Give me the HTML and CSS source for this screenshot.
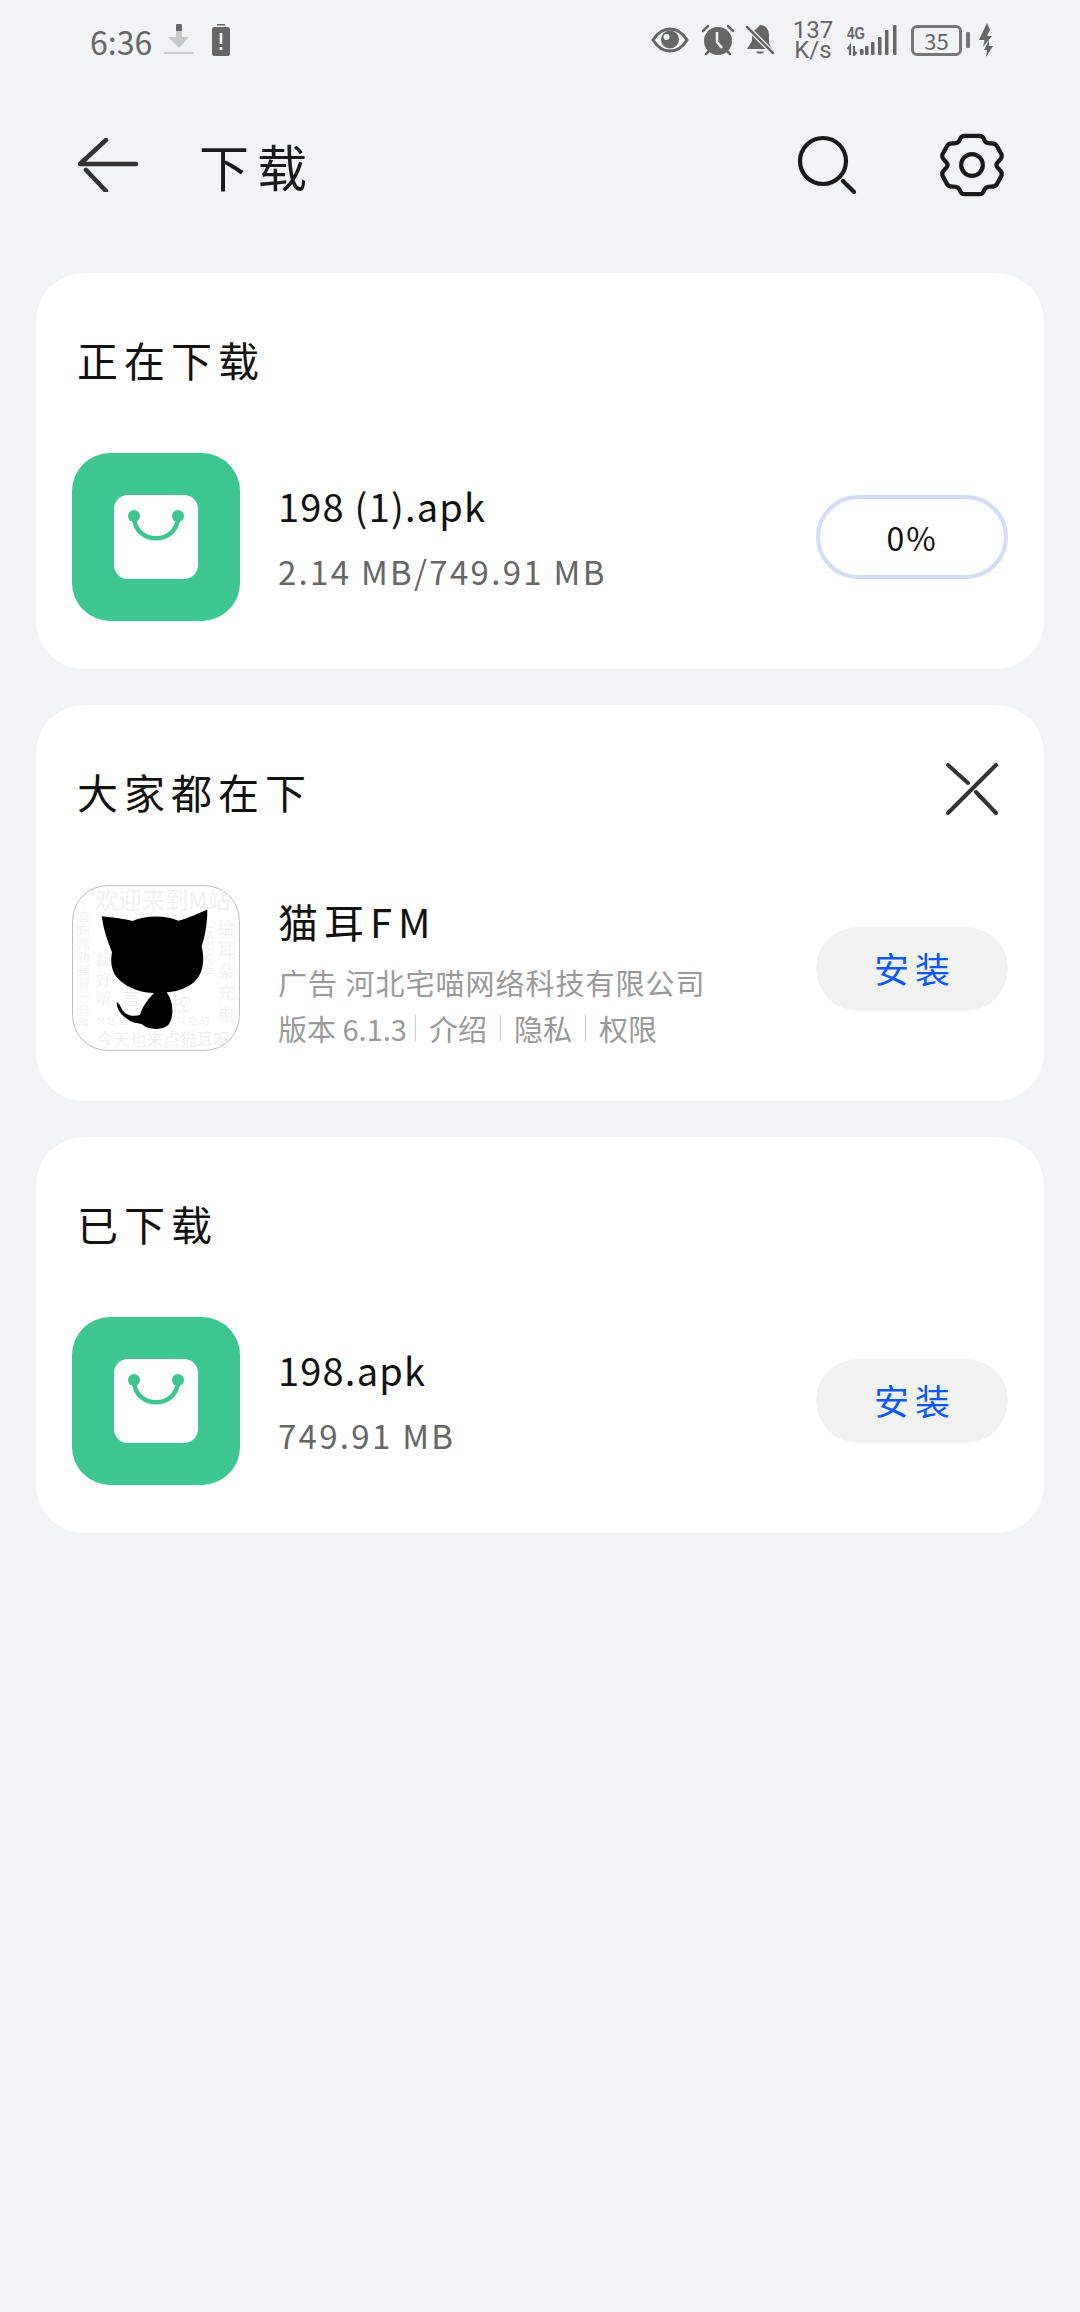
FILE: index.html
```html
<!DOCTYPE html>
<html lang="zh-CN">
<head>
    <meta charset="UTF-8">
    <meta name="viewport" content="width=device-width, initial-scale=1.0">
    <title>下载</title>
    <link rel="stylesheet" href="styles.css">
</head>
<body>
    <div class="status-bar">
        <div class="status-left">
            <span class="status-time">6:36</span>
            <svg class="status-download" width="30" height="32" viewBox="0 0 30 32">
                <rect x="12" y="0" width="6" height="8" rx="1" fill="#666"/>
                <path d="M12 7h6v6h7l-10 11L4 13h8z" fill="#c8c8c8"/>
                <rect x="0" y="28" width="30" height="2" fill="#ccc"/>
            </svg>
            <svg class="status-alert" width="18" height="32" viewBox="0 0 18 32">
                <rect x="5" y="0" width="8" height="1.5" fill="#666"/>
                <rect x="0" y="3" width="18" height="29" rx="2.5" fill="#666"/>
                <rect x="7.7" y="9" width="2.6" height="11" fill="#fff"/>
                <rect x="7.7" y="23" width="2.6" height="3" fill="#fff"/>
            </svg>
        </div>
        <div class="status-right">
            <svg class="icon-eye" width="38" height="26" viewBox="0 0 38 26">
                <path d="M2 13C7 5 13 2 19 2s12 3 17 11c-5 8-11 11-17 11S7 21 2 13z" fill="none" stroke="#666" stroke-width="3" stroke-linejoin="round"/>
                <circle cx="19" cy="12.500" r="9" fill="#666"/>
                <circle cx="15.500" cy="10" r="3" fill="#f1f3f5"/>
            </svg>
            <svg class="icon-alarm" width="34" height="32" viewBox="0 0 34 32">
                <circle cx="17" cy="17" r="14" fill="#666"/>
                <path d="M16 8v10l5 6" fill="none" stroke="#f1f3f5" stroke-width="2.500"/>
                <path d="M2 7l5-5M32 7l-5-5M5 30l3-3M29 30l-3-3" stroke="#666" stroke-width="2.500" stroke-linecap="round"/>
            </svg>
            <svg class="icon-bell" width="30" height="32" viewBox="0 0 30 32">
                <path d="M15 1c6 0 9 5 9 10v8l3 6H2l5-8V11c0-1 0-2 1-3z" fill="#666"/>
                <path d="M11 27.500h8c-1 3-7 3-8 0z" fill="#666"/>
                <path d="M2 3l26 26" stroke="#f1f3f5" stroke-width="5"/>
                <path d="M2 3l26 26" stroke="#666" stroke-width="2.500" stroke-linecap="round"/>
            </svg>
            <div class="net-speed">137<br>K/s</div>
            <svg class="icon-signal" width="52" height="32" viewBox="0 0 52 32">
                <text class="signal-label" x="0" y="15" textLength="18" lengthAdjust="spacingAndGlyphs">4G</text>
                <path d="M3 31V22l-2.500 3M7 22v9l2.500-3" fill="none" stroke="#666" stroke-width="2.200"/>
                <rect x="13" y="25" width="3.500" height="6" rx="1" fill="#666"/>
                <rect x="18" y="22" width="3.500" height="9" rx="1" fill="#666"/>
                <rect x="24" y="18" width="3.500" height="13" rx="1" fill="#666"/>
                <rect x="31" y="13" width="3.500" height="18" rx="1" fill="#666"/>
                <rect x="38" y="6" width="3.500" height="25" rx="1" fill="#666"/>
                <rect x="46" y="1" width="3.500" height="30" rx="1" fill="#666"/>
            </svg>
            <div class="battery"><span>35</span></div>
            <div class="battery-tip"></div>
            <svg class="icon-bolt" width="14" height="34" viewBox="0 0 14 34">
                <path d="M8 0L0 17h5.500L4 24l9-11H8l3-6z" fill="#666"/>
                <path d="M10 17l-5 10h3l-1 7 7-11h-4z" fill="#666"/>
            </svg>
        </div>
    </div>

    <div class="title-bar">
        <svg class="back-icon" width="60" height="54" viewBox="0 0 60 54">
            <path d="M28 2L2 26h56M8 32l20 21" fill="none" stroke="#333" stroke-width="4.500" stroke-linecap="round" stroke-linejoin="round"/>
        </svg>
        <h1 class="page-title">下载</h1>
        <svg class="search-icon" width="60" height="60" viewBox="0 0 60 60">
            <circle cx="26" cy="26" r="23" fill="none" stroke="#1a1a1a" stroke-width="4.200"/>
            <path d="M46 46l11 11" stroke="#1a1a1a" stroke-width="4.200" stroke-linecap="round"/>
        </svg>
        <svg class="gear-icon" width="64" height="64" viewBox="-34 -34 68 68">
            <path d="M-8 -31H8Q11 -31 12.500 -28Q14 -23 19 -23H21Q25 -23 27 -19.500L31 -12Q32.500 -9 30.500 -6.500L27 -2.500Q25 0 27 2.500L30.500 6.500Q32.500 9 31 12L27 19.500Q25 23 21 23H19Q14 23 12.500 28Q11 31 8 31H-8Q-11 31 -12.500 28Q-14 23 -19 23H-21Q-25 23 -27 19.500L-31 12Q-32.500 9 -30.500 6.500L-27 2.500Q-25 0 -27 -2.500L-30.500 -6.500Q-32.500 -9 -31 -12L-27 -19.500Q-25 -23 -21 -23H-19Q-14 -23 -12.500 -28Q-11 -31 -8 -31z" fill="none" stroke="#1a1a1a" stroke-width="4.500" stroke-linejoin="round"/>
            <circle cx="0" cy="0" r="11.500" fill="none" stroke="#1a1a1a" stroke-width="4.500"/>
        </svg>
    </div>

    <div class="card">
        <div class="card-header">
            <h2 class="card-title">正在下载</h2>
        </div>
        <div class="item">
            <svg class="app-icon" width="168" height="168" viewBox="0 0 168 168">
                <rect width="168" height="168" rx="38" fill="#3dc68f"/>
                <rect x="42" y="42" width="84" height="84" rx="14" fill="#fff"/>
                <circle cx="62" cy="63" r="6" fill="#3dc68f"/>
                <circle cx="106" cy="63" r="6" fill="#3dc68f"/>
                <path d="M62 65C64 92 104 92 106 65" fill="none" stroke="#3dc68f" stroke-width="4.500"/>
            </svg>
            <div class="item-info">
                <div class="item-name">198 (1).apk</div>
                <div class="item-sub">2.14 MB/749.91 MB</div>
            </div>
            <div class="pill pill-progress">0%</div>
        </div>
    </div>

    <div class="card">
        <div class="card-header">
            <h2 class="card-title">大家都在下</h2>
            <svg class="close-icon" width="52" height="52" viewBox="0 0 52 52">
                <path d="M2 50L50 2M2 2l20 18M30 29l20 21" fill="none" stroke="#333" stroke-width="4" stroke-linecap="round"/>
            </svg>
        </div>
        <div class="item">
            <svg class="app-icon cat-icon" width="168" height="168" viewBox="66 48 504 504">
                <rect x="68" y="50" width="500" height="494" rx="104" fill="#fff" stroke="#bbb" stroke-width="3"/>
                <text class="cat-text" x="135" y="120" font-size="70">欢迎来到M站</text>
                <text class="cat-text cat-vertical cat-narrow" x="102" y="126" font-size="34">喜你成功捕获一只M</text>
                <text class="cat-text cat-vertical cat-spaced" x="528" y="150" font-size="52">给耳朵充电</text>
                <text class="cat-text cat-vertical cat-spaced" x="162" y="248" font-size="46">超好听</text>
                <text class="cat-text" x="215" y="408" font-size="56">言</text>
                <text class="cat-text" x="365" y="425" font-size="56">控</text>
                <text class="cat-text cat-vertical" x="478" y="170" font-size="34">USSEVAN</text>
                <text class="cat-text" x="140" y="530" font-size="50">今天也来点猫耳呀</text>
                <text class="cat-text cat-small" x="140" y="466" font-size="28">M站里有很多可以吃的</text>
                <path d="M155 142C190 146 225 150 248 156C285 138 345 138 385 155C415 148 445 132 472 122C472 165 465 200 455 232C466 280 458 320 425 345C400 362 375 368 350 370C372 400 372 445 355 468C335 484 295 484 275 465C262 462 245 462 232 450C212 438 200 420 200 400C210 402 212 420 225 432C240 442 255 442 270 438C278 410 295 390 312 372C280 372 235 360 205 330C185 310 180 280 186 250C172 215 160 180 155 142z" fill="#000"/>
            </svg>
            <div class="item-info item-info-ad">
                <div class="item-name item-name-wide">猫耳FM</div>
                <div class="item-sub item-sub-light item-sub-first">广告 河北宅喵网络科技有限公司</div>
                <div class="item-sub item-sub-light item-links">
                    <span>版本 6.1.3</span>
                    <span>介绍</span>
                    <span>隐私</span>
                    <span>权限</span>
                </div>
            </div>
            <div class="pill pill-install">安装</div>
        </div>
    </div>

    <div class="card">
        <div class="card-header">
            <h2 class="card-title">已下载</h2>
        </div>
        <div class="item">
            <svg class="app-icon" width="168" height="168" viewBox="0 0 168 168">
                <rect width="168" height="168" rx="38" fill="#3dc68f"/>
                <rect x="42" y="42" width="84" height="84" rx="14" fill="#fff"/>
                <circle cx="62" cy="63" r="6" fill="#3dc68f"/>
                <circle cx="106" cy="63" r="6" fill="#3dc68f"/>
                <path d="M62 65C64 92 104 92 106 65" fill="none" stroke="#3dc68f" stroke-width="4.500"/>
            </svg>
            <div class="item-info">
                <div class="item-name">198.apk</div>
                <div class="item-sub">749.91 MB</div>
            </div>
            <div class="pill pill-install">安装</div>
        </div>
    </div>
</body>
</html>
```

FILE: styles.css
```css
body {
    font-family: "Noto Sans CJK SC", "Noto Sans", sans-serif;
    margin: 0;
    padding: 0;
    background-color: #f1f3f5;
    color: #111;
    height: 2312px;
    overflow: hidden;
}
.status-bar {
    display: flex;
    justify-content: space-between;
    align-items: center;
    height: 80px;
    padding: 0 87px 0 90px;
    color: #666;
}
.status-left {
    display: flex;
    align-items: center;
}
.status-time {
    font-size: 32px;
    line-height: 40px;
    margin-top: 2px;
}
.status-download {
    margin-left: 12px;
}
.status-alert {
    margin-left: 18px;
}
.status-right {
    display: flex;
    align-items: center;
}
.icon-alarm {
    margin-left: 12px;
}
.icon-bell {
    margin-left: 10px;
}
.net-speed {
    font-family: Roboto, sans-serif;
    font-size: 24px;
    line-height: 20px;
    text-align: center;
    margin-left: 16px;
    width: 44px;
}
.icon-signal {
    margin-left: 12px;
}
.signal-label {
    font-family: "Liberation Sans", sans-serif;
    font-size: 17px;
    font-weight: bold;
    fill: #666;
}
.battery {
    width: 51px;
    height: 31px;
    margin-left: 12px;
    border: 3px solid #777;
    border-radius: 6px;
    box-sizing: border-box;
    display: flex;
    justify-content: center;
    align-items: center;
    font-size: 22px;
}
.battery-tip {
    width: 4px;
    height: 16px;
    margin-left: 4px;
    background: #777;
    border-radius: 1px;
}
.icon-bolt {
    margin-left: 9px;
}
.title-bar {
    display: flex;
    align-items: center;
    height: 170px;
    margin-bottom: 23px;
    padding: 0 76px 0 78px;
}
.page-title {
    flex: 1;
    margin: 0 0 0 61px;
    font-size: 50px;
    font-weight: 400;
    letter-spacing: 8px;
    color: #1a1a1a;
}
.search-icon {
    margin-right: 83px;
}
.card {
    margin: 0 36px 36px;
    padding: 0 36px 48px;
    background: #fff;
    border-radius: 48px;
}
.card-header {
    display: flex;
    justify-content: space-between;
    align-items: center;
    height: 180px;
}
.card-title {
    margin: 0 0 0 5px;
    padding-bottom: 8px;
    font-size: 41px;
    font-weight: 400;
    letter-spacing: 6px;
    color: #111;
}
.close-icon {
    margin-right: 10px;
    margin-top: -12px;
}
.item {
    display: flex;
    align-items: center;
}
.app-icon {
    flex-shrink: 0;
}
.item-info {
    flex: 1;
    margin-left: 38px;
}
.item-info-ad {
    padding-top: 8px;
}
.item-name {
    font-size: 38px;
    line-height: 52px;
    letter-spacing: 1.2px;
    color: #111;
}
.item-name-wide {
    font-size: 40px;
    letter-spacing: 6px;
}
.item-sub {
    font-size: 33px;
    line-height: 46px;
    margin-top: 16px;
    letter-spacing: 2.3px;
    color: #666;
}
.item-sub-light {
    font-size: 29px;
    line-height: 46px;
    margin-top: 0;
    letter-spacing: 1px;
    color: #999;
}
.item-sub-first {
    margin-top: 12px;
}
.item-links {
    display: flex;
    align-items: center;
    height: 47px;
    letter-spacing: 0;
}
.item-links span {
    padding: 0 13px;
    line-height: 26px;
    border-left: 1px solid #ccc;
}
.item-links span:first-child {
    padding: 0 8px 0 0;
    border-left: none;
}
.pill {
    box-sizing: border-box;
    flex-shrink: 0;
    display: flex;
    justify-content: center;
    align-items: center;
    width: 192px;
    height: 84px;
    border-radius: 42px;
    font-size: 36px;
}
.pill-progress {
    border: 4px solid #d0dff7;
    font-size: 32px;
    letter-spacing: 2px;
    color: #111;
}
.pill-install {
    background: #f1f1f1;
    color: #0a59f7;
    font-size: 35px;
    letter-spacing: 6px;
    padding: 0 0 4px 6px;
}
.cat-text {
    fill: #f0f0f0;
}
.cat-vertical {
    writing-mode: vertical-rl;
}
.cat-spaced {
    letter-spacing: 13px;
}
.cat-narrow {
    letter-spacing: 6px;
}
.cat-small {
    letter-spacing: 7px;
}
```
